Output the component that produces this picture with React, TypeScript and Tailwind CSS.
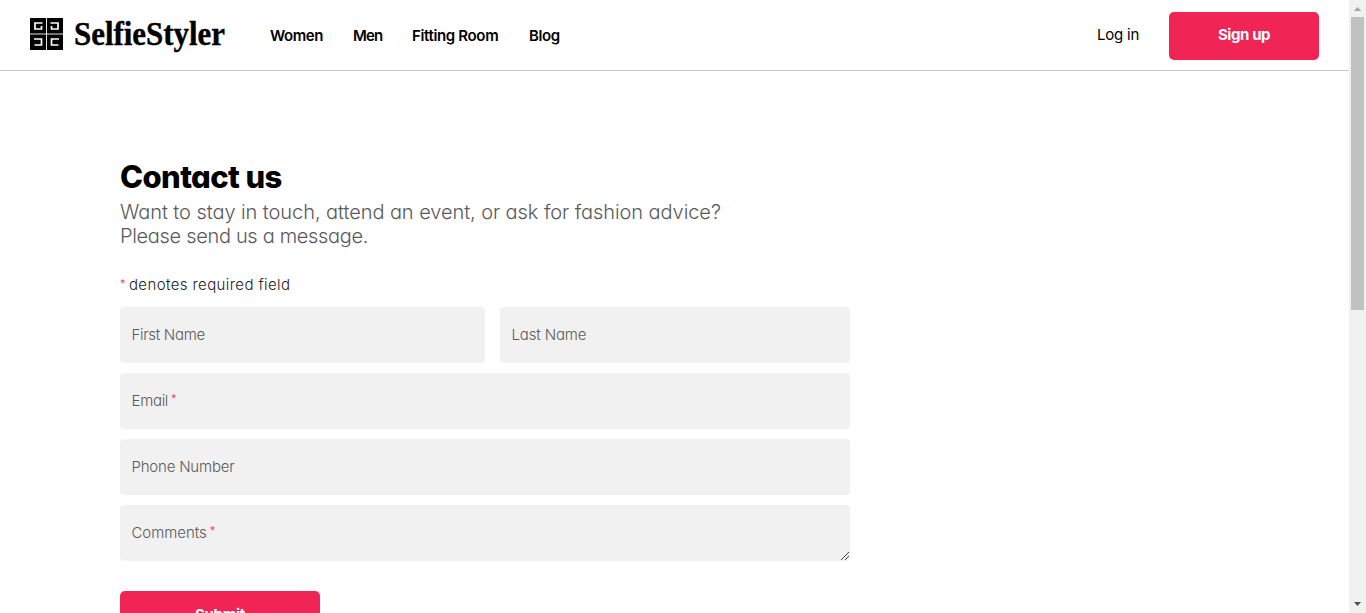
import React from "react";

const INTER = "font-['Inter','Liberation_Sans',sans-serif] [font-feature-settings:'cv11']";

function Mark() {
  return (
    <svg width="33" height="32" viewBox="0 0 33 32" className="mb-0.5 shrink-0" aria-hidden="true">
      <rect width="33" height="32" fill="#000" />
      <path d="M16.500 0V32M0 16H33" stroke="#e4e4e4" strokeWidth="1" />
      <g fill="none" stroke="#fff" strokeWidth="1.700">
        <path d="M12.500 5H5V11H11.500V8" />
        <path d="M20.500 5H28V11H21.500V8" />
        <path d="M4 21H11.500V27H4.500" />
        <path d="M29 21H21.500V27H28.500" />
      </g>
    </svg>
  );
}

interface FieldProps {
  label: string;
  required?: boolean;
  resizable?: boolean;
  className?: string;
}

function Field({ label, required, resizable, className = "" }: FieldProps) {
  return (
    <div className={`relative flex h-14 items-center rounded bg-[#f1f1f1] px-[11.500px] text-[15px] font-light text-[#5a5a5a] ${className}`}>
      <span>{label}</span>
      {required && <span className="-mt-1 ml-[3px] text-[11px] text-[#f02455]">*</span>}
      {resizable && (
        <svg className="absolute right-0 bottom-0" width="10" height="10" viewBox="0 0 10 10" aria-hidden="true">
          <path d="M1 9L9 1M5 9L9 5" stroke="#444" strokeWidth="1" />
        </svg>
      )}
    </div>
  );
}

export default function App() {
  return (
    <div className={`flex h-[613px] overflow-hidden bg-white text-black ${INTER}`}>
      <div className="flex min-w-0 flex-1 flex-col">
        <header className="flex h-[71px] shrink-0 items-center border-b border-[#c8c8c8] px-[30px]">
          <Mark />
          <svg className="ml-[11px] shrink-0 overflow-visible" width="152" height="50" viewBox="0 0 152 50" aria-label="SelfieStyler">
            <text
              x="0"
              y="34.500"
              textLength="151"
              lengthAdjust="spacingAndGlyphs"
              fontSize="33"
              fontWeight="700"
              stroke="#000"
              strokeWidth="0.400"
              className="font-['Liberation_Serif',serif]"
            >
              SelfieStyler
            </text>
          </svg>
          <nav className="ml-[44px] flex gap-[30px] pt-px text-[15px] leading-5 font-semibold whitespace-nowrap">
            <a className="w-[53px] tracking-[-0.450px]">Women</a>
            <a className="w-[29px] tracking-[-0.900px]">Men</a>
            <a className="w-[87px] tracking-[-0.350px]">Fitting Room</a>
            <a className="tracking-[-0.400px]">Blog</a>
          </nav>
          <a className="ml-auto w-[42px] pt-px text-[15px] tracking-[-0.200px] whitespace-nowrap">Log in</a>
          <button className="mt-px ml-[30px] h-12 w-[150px] rounded-[5px] bg-[#f02455] text-[15px] font-bold tracking-[-0.400px] text-white">
            Sign up
          </button>
        </header>
        <main className="w-[850px] pt-[86px] pl-[120px]">
          <h1 className="text-[31px] leading-[40px] font-extrabold tracking-[-0.600px]">Contact us</h1>
          <p className="mt-[3px] text-[20px] leading-6 font-light whitespace-nowrap text-[#5a5a5a]">
            <span className="tracking-[-0.070px]">Want to stay in touch, attend an event, or ask for fashion advice?</span>
            <br />
            <span className="tracking-[-0.320px]">Please send us a message.</span>
          </p>
          <p className="mt-[26px] text-[15px] leading-5 font-light tracking-[0.400px] text-[#222]">
            <span className="mr-[3px] align-[2px] text-[11px] text-[#f02455]">*</span>denotes required field
          </p>
          <form className="mt-3 flex flex-col gap-[10px]">
            <div className="flex gap-[15px]">
              <Field label="First Name" className="w-[365px] tracking-[-0.300px]" />
              <Field label="Last Name" className="w-[350px] tracking-[-0.150px]" />
            </div>
            <Field label="Email" required className="tracking-[-0.300px]" />
            <Field label="Phone Number" className="tracking-[-0.200px]" />
            <Field label="Comments" required resizable className="tracking-[-0.050px]" />
            <button type="button" className="mt-5 h-12 w-[200px] shrink-0 rounded-[5px] bg-[#f02455] text-[15px] font-bold tracking-[-0.300px] text-white">
              Submit
            </button>
          </form>
        </main>
      </div>
      <div className="flex w-[17px] shrink-0 flex-col items-center bg-[#f1f1f1]">
        <svg width="17" height="17" viewBox="0 0 17 17" className="shrink-0" aria-hidden="true">
          <path d="M5 11H12L8.500 7Z" fill="#a3a3a3" />
        </svg>
        <div className="h-[293px] w-[13px] bg-[#c1c1c1]" />
        <svg width="17" height="17" viewBox="0 0 17 17" className="mt-auto shrink-0" aria-hidden="true">
          <path d="M5 6H12L8.500 10Z" fill="#505050" />
        </svg>
      </div>
    </div>
  );
}
